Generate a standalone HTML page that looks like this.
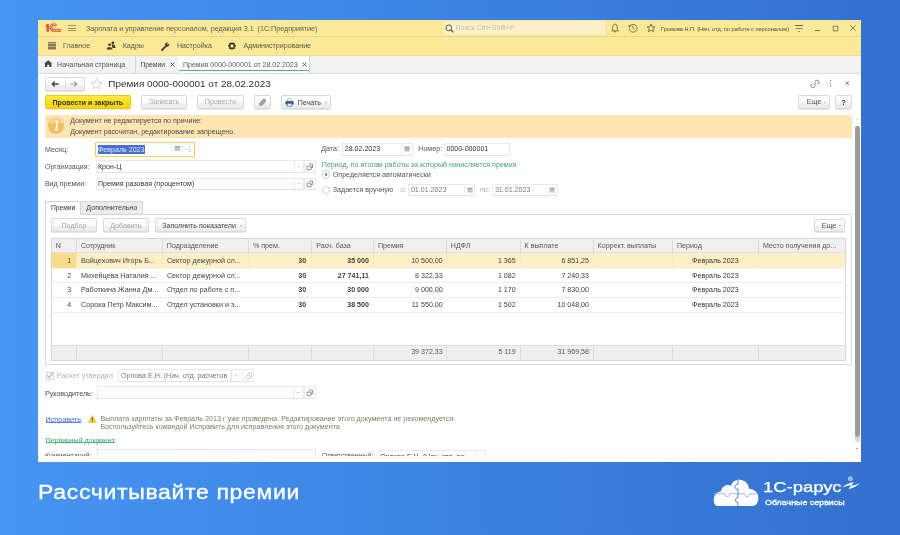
<!DOCTYPE html>
<html><head><meta charset="utf-8">
<style>
*{box-sizing:border-box;margin:0;padding:0}
html,body{width:900px;height:535px;overflow:hidden}
body{position:relative;font-family:"Liberation Sans",sans-serif;background:linear-gradient(90deg,#4695f3,#3470cd);color:#404040;font-size:7.1px}
.a{position:absolute;white-space:nowrap}
#win{position:absolute;left:38px;top:20px;width:823px;height:441px;background:#fff;overflow:hidden}
.bar{position:absolute}
.btn{position:absolute;border:1px solid #dadada;border-radius:2px;background:linear-gradient(#fefefe 0,#fafafa 55%,#f0f0f0 56%,#ececec 100%);box-shadow:0 1px 0 rgba(0,0,0,.1);text-align:center;color:#444;white-space:nowrap}
.dis{color:#a8a8a8}
.inp{position:absolute;border:1px solid #e9e9e9;border-bottom-color:#e2e2e2;background:#fff;white-space:nowrap;color:#333}
.lbl{position:absolute;white-space:nowrap;color:#555}
.vd{position:absolute;top:0;bottom:0;width:1px;background:#ececec}
.dd{position:absolute;width:0;height:0;border-left:1.6px solid transparent;border-right:1.6px solid transparent;border-top:1.6px solid #777}
svg{position:absolute;overflow:visible}
.th{position:absolute;top:0;height:15px;line-height:15px;color:#555;border-right:1px solid #dcdcdc;padding-left:4px;white-space:nowrap}
.row{position:absolute;left:0;width:795px;height:15px;border-bottom:1px solid #eeeeee}
.c{position:absolute;top:0;height:14px;line-height:14px;white-space:nowrap;color:#333}
.r{text-align:right}
.b{font-weight:bold}
</style></head><body>
<div id="root" style="position:absolute;left:0;top:0;width:900px;height:535px;will-change:transform">

<!-- window chrome -->
<div class="bar" style="left:38px;top:20px;width:823px;height:441.6px;background:#fff"></div>
<div class="bar" style="left:38px;top:20px;width:823px;height:17px;background:#fae997;border-bottom:1px solid #e6d488"></div>
<div class="bar" style="left:38px;top:37px;width:823px;height:19px;background:#fae997;border-bottom:1px solid #ecdb92"></div>
<div class="bar" style="left:38px;top:56px;width:823px;height:18px;background:#f2f2f2;border-bottom:1px solid #dcdcdc"></div>

<!-- title bar content -->
<svg style="left:45px;top:23px" width="18" height="10" viewBox="0 0 18 10">
  <path d="M1.5 1 H3.9 V8.7 H1.5 Z M0.5 3.4 L1.6 1.4 L1.6 4.2 Z" fill="#e55239"/>
  <path d="M11.8 2.4 A3.75 3.75 0 1 0 8.8 8.3 H16.1" fill="none" stroke="#e55239" stroke-width="1.15"/>
  <path d="M10.4 3.5 A2 2 0 1 0 8.8 6.5 H16.1" fill="none" stroke="#e55239" stroke-width="1.1"/>
</svg>
<div class="bar" style="left:68px;top:25px;width:8px;height:1px;background:#9a8f6a"></div>
<div class="bar" style="left:68px;top:27.5px;width:8px;height:1px;background:#9a8f6a"></div>
<div class="bar" style="left:68px;top:30px;width:8px;height:1px;background:#9a8f6a"></div>
<div class="a" style="left:86px;top:23.6px;line-height:10px;font-size:7.15px;color:#5e5b50">Зарплата и управление персоналом, редакция 3.1&nbsp; (1С:Предприятие)</div>
<div class="bar" style="left:444px;top:21px;width:161px;height:14px;background:#fbf1c8"></div>
<svg style="left:445px;top:24px" width="9" height="9" viewBox="0 0 9 9"><circle cx="3.8" cy="3.8" r="2.9" fill="none" stroke="#555" stroke-width="1"/><path d="M6 6 L8.2 8.2" stroke="#555" stroke-width="1.3"/></svg>
<div class="a" style="left:455.5px;top:23px;line-height:10px;font-size:7px;color:#c9c0a0">Поиск Ctrl+Shift+F</div>
<!-- bell -->
<svg style="left:610px;top:23px" width="10" height="10" viewBox="0 0 10 10"><path d="M5 1.2 C3.4 1.2 2.8 2.6 2.8 4.2 L2.8 6.2 L1.5 7.9 H8.5 L7.2 6.2 L7.2 4.2 C7.2 2.6 6.6 1.2 5 1.2 Z" fill="none" stroke="#5c5848" stroke-width="0.8" stroke-linejoin="round"/><circle cx="5" cy="8.7" r="0.75" fill="#5c5848"/></svg>
<!-- history -->
<svg style="left:628px;top:23px" width="10" height="10" viewBox="0 0 10 10"><path d="M2 3 A3.9 3.9 0 1 1 1.3 5.6" fill="none" stroke="#5c5848" stroke-width="0.8"/><path d="M0.9 2.2 L2.4 3.9 L1.2 4.1 Z" fill="#5c5848" stroke="#5c5848" stroke-width="0.6"/><path d="M4.2 2.8 L5.2 5.2 L6.6 6.4" fill="none" stroke="#5c5848" stroke-width="0.8"/></svg>
<!-- star -->
<svg style="left:646px;top:23px" width="10" height="10" viewBox="0 0 10 10"><path d="M5 1 L6.1 3.8 L9 3.9 L6.8 5.8 L7.6 8.8 L5 7.2 L2.4 8.8 L3.2 5.8 L1 3.9 L3.9 3.8 Z" fill="none" stroke="#5c5848" stroke-width="0.8" stroke-linejoin="round"/></svg>
<div class="a" style="left:661px;top:23.5px;line-height:10px;font-size:5.6px;color:#4a4a40">Громова Н.П. (Нач. отд. по работе с персоналом)</div>
<!-- filter icon -->
<div class="bar" style="left:795.3px;top:25px;width:7.8px;height:0.9px;background:#6a6553"></div>
<div class="bar" style="left:795.6px;top:27.8px;width:7.2px;height:0.9px;background:#8a8470"></div>
<div class="dd" style="left:797.6px;top:30.6px;border-width:1.4px 1.5px 0 1.5px;border-top-color:#4a4a55"></div>
<!-- window controls -->
<div class="bar" style="left:815px;top:29.6px;width:4.6px;height:0.9px;background:#7a7560"></div>
<svg style="left:832px;top:25px" width="7" height="7" viewBox="0 0 7 7"><path d="M1.2 1.2 H5.8 V5.8 H1.2 Z" fill="none" stroke="#6e6a58" stroke-width="0.85"/></svg>
<svg style="left:849px;top:24px" width="8" height="8" viewBox="0 0 8 8"><path d="M1.2 1.2 L6.8 6.8 M6.8 1.2 L1.2 6.8" stroke="#6e6a58" stroke-width="0.85"/></svg>

<!-- menu bar -->
<div class="bar" style="left:47.5px;top:42px;width:8px;height:8px;background:repeating-linear-gradient(#877b5c 0 1px,#bcb083 1px 1.6px)"></div>
<div class="a" style="left:63px;top:40.6px;line-height:10px;font-size:7.1px;color:#5c594c">Главное</div>
<svg style="left:106px;top:41px" width="10" height="9" viewBox="0 0 10 9"><circle cx="6.9" cy="1.9" r="1.35" fill="#3f3c32"/><path d="M5.6 4 C6.2 3.4 8 3.4 8.9 4.4 L9.6 6.9 H6.6 Z" fill="#3f3c32"/><circle cx="3.6" cy="3.7" r="1.6" fill="#3f3c32" stroke="#fae997" stroke-width="0.5"/><path d="M0.5 8.7 L0.9 6.8 C1.4 5.7 5.6 5.7 6.2 6.8 L6.6 8.7 Z" fill="#3f3c32" stroke="#fae997" stroke-width="0.4"/></svg>
<div class="a" style="left:122.7px;top:40.6px;line-height:10px;font-size:7.1px;color:#5c594c">Кадры</div>
<svg style="left:161px;top:42px" width="9" height="9" viewBox="0 0 9 9"><path d="M1 8 L4.6 4.4" stroke="#3f3c34" stroke-width="1.8" stroke-linecap="round"/><path d="M4 3.2 A2.4 2.4 0 0 1 7.2 0.6 L6 2 L6.8 2.8 L8.2 1.6 A2.4 2.4 0 0 1 5.4 4.8 Z" fill="#3f3c34"/></svg>
<div class="a" style="left:177px;top:40.6px;line-height:10px;font-size:7.1px;color:#5c594c">Настройка</div>
<svg style="left:228px;top:42px" width="8" height="8" viewBox="0 0 8 8"><circle cx="4" cy="4" r="2.4" fill="none" stroke="#3f3c34" stroke-width="1.5"/><path d="M4 0.2 V1.6 M4 6.4 V7.8 M0.2 4 H1.6 M6.4 4 H7.8 M1.3 1.3 L2.3 2.3 M5.7 5.7 L6.7 6.7 M1.3 6.7 L2.3 5.7 M5.7 2.3 L6.7 1.3" stroke="#3f3c34" stroke-width="1.3"/></svg>
<div class="a" style="left:243.4px;top:40.6px;line-height:10px;font-size:7.1px;color:#5c594c">Администрирование</div>

<!-- tabs -->
<svg style="left:43.6px;top:60.2px" width="8.5" height="7.5" viewBox="0 0 8.5 7.5"><path d="M4.2 0.3 L8.2 3.6 L7.4 3.6 L7.4 7 L5.2 7 L5.2 4.8 L3.2 4.8 L3.2 7 L1 7 L1 3.6 L0.2 3.6 Z" fill="#474747"/></svg>
<div class="a" style="left:57.1px;top:60.2px;line-height:10px;font-size:7.05px;color:#555">Начальная страница</div>
<div class="bar" style="left:135px;top:56px;width:1px;height:17px;background:#d6d6d6"></div>
<div class="a" style="left:140.5px;top:60.2px;line-height:10px;font-size:6.75px;color:#444">Премии</div>
<svg style="left:169.5px;top:62px" width="5" height="5" viewBox="0 0 5 5"><path d="M0.6 0.6 L4.4 4.4 M4.4 0.6 L0.6 4.4" stroke="#444" stroke-width="0.9"/></svg>
<div class="bar" style="left:177.5px;top:56px;width:1px;height:17px;background:#d6d6d6"></div>
<div class="bar" style="left:178px;top:56px;width:131px;height:17px;background:#fff"></div>
<div class="bar" style="left:179px;top:70px;width:129.5px;height:1.3px;background:#4cb37a"></div>
<div class="bar" style="left:308.5px;top:56px;width:1px;height:17px;background:#d6d6d6"></div>
<div class="a" style="left:183px;top:60.2px;line-height:10px;font-size:7.02px;color:#555">Премия 0000-000001 от 28.02.2023</div>
<svg style="left:301.8px;top:62px" width="5" height="5" viewBox="0 0 5 5"><path d="M0.6 0.6 L4.4 4.4 M4.4 0.6 L0.6 4.4" stroke="#444" stroke-width="0.9"/></svg>
<div class="bar" style="left:38px;top:73px;width:823px;height:1px;background:#dcdcdc"></div>

<!-- form header -->
<div class="btn" style="left:45px;top:77px;width:39.5px;height:13.5px"></div>
<div class="bar" style="left:64.5px;top:78px;width:1px;height:12px;background:#e2e2e2"></div>
<svg style="left:51px;top:81px" width="8" height="6" viewBox="0 0 8 6"><path d="M7.6 3 H1.6 M3.8 0.6 L1.2 3 L3.8 5.4" fill="none" stroke="#444" stroke-width="1.3"/></svg>
<svg style="left:70px;top:81px" width="8" height="6" viewBox="0 0 8 6"><path d="M0.4 3 H6.4 M4.2 0.6 L6.8 3 L4.2 5.4" fill="none" stroke="#9a9a9a" stroke-width="1.2"/></svg>
<svg style="left:90px;top:78px" width="13" height="12" viewBox="0 0 13 12"><path d="M6.5 0.6 L8.1 4.3 L12.2 4.5 L9 7.1 L10.1 11.2 L6.5 9 L2.9 11.2 L4 7.1 L0.8 4.5 L4.9 4.3 Z" fill="none" stroke="#c4c8cc" stroke-width="0.8" stroke-linejoin="round"/></svg>
<div class="a" style="left:108.3px;top:77.5px;line-height:12px;font-size:9.95px;color:#333">Премия 0000-000001 от 28.02.2023</div>
<svg style="left:810px;top:79px" width="10" height="10" viewBox="0 0 10 10"><g fill="none" stroke="#808080" stroke-width="0.95"><path d="M4.9 3.7 A2.1 2.1 0 1 1 7.4 5.4"/><path d="M5.1 6.3 A2.1 2.1 0 1 1 2.6 4.6"/><path d="M4 6 L6 4"/></g></svg>
<div class="bar" style="left:830.3px;top:80.3px;width:1.1px;height:1.1px;background:#6e6e6e"></div>
<div class="bar" style="left:830.3px;top:82.6px;width:1.1px;height:1.1px;background:#6e6e6e"></div>
<div class="bar" style="left:830.3px;top:84.9px;width:1.1px;height:1.1px;background:#6e6e6e"></div>
<svg style="left:845px;top:81.4px" width="4.4" height="4.4" viewBox="0 0 4.4 4.4"><path d="M0.4 0.4 L4 4 M4 0.4 L0.4 4" stroke="#7a7a7a" stroke-width="0.95"/></svg>

<!-- toolbar -->
<div class="btn" style="left:45px;top:95px;width:85.7px;height:14px;background:linear-gradient(#ffe944,#f6d200);border-color:#ecca10;font-weight:bold;font-size:7.05px;line-height:13.6px;color:#333">Провести и закрыть</div>
<div class="btn dis" style="left:141px;top:95px;width:46.3px;height:14px;line-height:13px">Записать</div>
<div class="btn dis" style="left:197px;top:95px;width:47px;height:14px;line-height:13px">Провести</div>
<div class="btn" style="left:254px;top:95px;width:16.5px;height:14px"></div>
<svg style="left:257px;top:97px" width="11" height="11" viewBox="0 0 11 11"><path d="M3.9 7.1 L7.1 3.6" stroke="#a0a0a0" stroke-width="4" stroke-linecap="round"/><path d="M4.8 6.6 L7.2 4" stroke="#c0c0c0" stroke-width="0.5"/></svg>
<div class="btn" style="left:281px;top:95px;width:49.6px;height:14px"></div>
<svg style="left:285px;top:98px" width="9" height="9" viewBox="0 0 9 9"><path d="M2.4 3 V0.9 H5.6 L6.6 1.9 V3" fill="none" stroke="#8aa0bc" stroke-width="0.7"/><rect x="0.3" y="3" width="8.4" height="3.8" rx="1.2" fill="#3d6198"/><rect x="2.2" y="5.3" width="4.6" height="2.8" fill="#fff" stroke="#3d6198" stroke-width="0.7"/></svg>
<div class="a" style="left:297.8px;top:97.6px;line-height:10px;font-size:7.1px;color:#444">Печать</div>
<div class="dd" style="left:324.8px;top:102px"></div>
<div class="btn" style="left:798.2px;top:95px;width:32.2px;height:14px;line-height:13px;text-align:left;padding-left:7.6px;color:#555">Еще</div>
<div class="dd" style="left:824px;top:101.6px;border-width:1.4px 1.3px 0 1.3px"></div>
<div class="btn b" style="left:835.2px;top:95px;width:16.8px;height:14px;line-height:13px;font-size:7.5px;color:#333">?</div>

<!-- notification -->
<div class="bar" style="left:44.9px;top:114.6px;width:806.8px;height:23.6px;background:#fee5b1"></div>
<div class="bar" style="left:47.6px;top:117px;width:16.8px;height:16.8px;border-radius:50%;background:linear-gradient(#f4d28e 0,#f4d28e 35%,#f1bf68 36%,#f1bf68 100%)"></div>
<svg style="left:47.6px;top:117px" width="17" height="17" viewBox="0 0 17 17"><circle cx="9" cy="4.8" r="1.25" fill="#fff"/><path d="M8 6.6 L9.9 6.6 L8.9 12.3 L9.9 12.3 L9.7 13.6 L6.7 13.6 L6.9 12.3 L7.4 12.3 L8.2 7.8 L7.8 7.8 Z" fill="#fff"/></svg>
<div class="a" style="left:70.2px;top:115.6px;line-height:11px;font-size:7.1px;color:#4a4a4a">Документ не редактируется по причине:<br>Документ рассчитан, редактирование запрещено.</div>

<!-- fields left -->
<div class="lbl" style="left:44.9px;top:144.8px;line-height:10px">Месяц:</div>
<div class="bar" style="left:94.9px;top:142.3px;width:100px;height:14.3px;border:1.6px solid #f6cd52;background:#fff"></div>
<div class="bar" style="left:97.9px;top:145.1px;width:46.9px;height:8.5px;background:#4a6fcf"></div>
<div class="a" style="left:97.9px;top:144.7px;line-height:10px;font-size:7.1px;color:#dfe6f6">Февраль 2023</div>
<div class="bar" style="left:171px;top:144px;width:1px;height:11px;background:#ececec"></div>
<div class="bar" style="left:182px;top:144px;width:1px;height:11px;background:#ececec"></div>
<svg style="left:173.6px;top:145.4px" width="7" height="7" viewBox="0 0 7 7"><rect x="0.6" y="1" width="5.6" height="5" rx="0.6" fill="#c4c4c4"/><rect x="0.6" y="1" width="5.6" height="1.3" fill="#a4a4a4"/></svg>
<div class="bar" style="left:183px;top:149px;width:11px;height:1px;background:#ececec"></div>
<div class="bar" style="left:188.5px;top:146.6px;width:1px;height:1px;background:#aaa"></div>
<div class="bar" style="left:188.5px;top:151.4px;width:1px;height:1px;background:#aaa"></div>

<div class="lbl" style="left:44.9px;top:161.5px;line-height:10px">Организация:</div>
<div class="inp" style="left:96.2px;top:160.3px;width:208px;height:12.3px;line-height:10.3px;padding-top:1px;padding-left:0.8px">Крон-Ц</div>
<div class="bar" style="left:293.6px;top:161px;width:1px;height:11px;background:#ececec"></div>
<div class="dd" style="left:297.2px;top:166px;border-top-color:#8a8a8a;margin-left:0.4px;margin-top:0.3px"></div>
<div class="inp" style="left:304.2px;top:160.3px;width:11.4px;height:12.3px"></div>
<svg style="left:306.3px;top:162.5px" width="8" height="8" viewBox="0 0 8 8"><path d="M3 1 H6.6 V4.6 H5 M1.2 3 H5 V6.8 H1.2 Z" fill="none" stroke="#606060" stroke-width="0.7"/></svg>

<div class="lbl" style="left:44.9px;top:178.5px;line-height:10px">Вид премии:</div>
<div class="inp" style="left:96.2px;top:177.5px;width:208px;height:12px;line-height:10px;padding-left:0.8px">Премия разовая (процентом)</div>
<div class="bar" style="left:293.6px;top:178px;width:1px;height:11px;background:#ececec"></div>
<div class="dd" style="left:297.2px;top:183px;border-top-color:#8a8a8a;margin-left:0.4px;margin-top:0.3px"></div>
<div class="inp" style="left:304.2px;top:177.5px;width:11.4px;height:12px"></div>
<svg style="left:306.3px;top:179.5px" width="8" height="8" viewBox="0 0 8 8"><path d="M3 1 H6.6 V4.6 H5 M1.2 3 H5 V6.8 H1.2 Z" fill="none" stroke="#606060" stroke-width="0.7"/></svg>

<!-- fields right -->
<div class="lbl" style="left:321.2px;top:144.1px;line-height:10px">Дата:</div>
<div class="inp" style="left:342.1px;top:142.9px;width:70.7px;height:12.9px;line-height:10.9px;padding-left:1.6px">28.02.2023</div>
<div class="bar" style="left:401.2px;top:143.5px;width:1px;height:11.5px;background:#ececec"></div>
<svg style="left:404.3px;top:146px" width="6" height="6" viewBox="0 0 6 6"><rect x="0.5" y="0.8" width="5" height="4.6" rx="0.5" fill="#bcbcbc"/><rect x="0.5" y="0.8" width="5" height="1.1" fill="#9c9c9c"/></svg>
<div class="lbl" style="left:418.3px;top:144.1px;line-height:10px">Номер:</div>
<div class="inp" style="left:443.9px;top:142.9px;width:66.2px;height:12.9px;line-height:10.9px;padding-left:1.6px">0000-000001</div>

<div class="a" style="left:321.8px;top:159.5px;line-height:10px;color:#3ea56e">Период, по итогам работы за который начисляется премия</div>
<div class="bar" style="left:321.6px;top:170.3px;width:8.6px;height:8.6px;border-radius:50%;border:0.8px solid #cfcfcf;background:#fff"></div>
<div class="bar" style="left:324.5px;top:173.1px;width:2.8px;height:2.8px;border-radius:50%;background:#3a9d63"></div>
<div class="lbl" style="left:332.8px;top:169.5px;line-height:10px">Определяется автоматически</div>
<div class="bar" style="left:321.6px;top:185.9px;width:8.6px;height:8.6px;border-radius:50%;border:0.8px solid #cfcfcf;background:#fff"></div>
<div class="lbl" style="left:332.8px;top:185px;line-height:10px">Задается вручную</div>
<div class="lbl" style="left:400.6px;top:185px;line-height:10px;color:#aaa">с:</div>
<div class="inp" style="left:408.3px;top:183.6px;width:66.5px;height:12.6px;line-height:10.6px;padding-left:1.6px;color:#7a7a7a">01.01.2023</div>
<div class="bar" style="left:463.9px;top:184.2px;width:1px;height:11.4px;background:#ececec"></div>
<svg style="left:466.8px;top:186.8px" width="6" height="6" viewBox="0 0 6 6"><rect x="0.5" y="0.8" width="5" height="4.6" rx="0.5" fill="#c2c2c2"/><rect x="0.5" y="0.8" width="5" height="1.1" fill="#a6a6a6"/></svg>
<div class="lbl" style="left:479.9px;top:185px;line-height:10px;color:#aaa">по:</div>
<div class="inp" style="left:492.3px;top:183.6px;width:65.4px;height:12.6px;line-height:10.6px;padding-left:1.6px;color:#7a7a7a">31.01.2023</div>
<div class="bar" style="left:546.3px;top:184.2px;width:1px;height:11.4px;background:#ececec"></div>
<svg style="left:549.2px;top:186.8px" width="6" height="6" viewBox="0 0 6 6"><rect x="0.5" y="0.8" width="5" height="4.6" rx="0.5" fill="#c2c2c2"/><rect x="0.5" y="0.8" width="5" height="1.1" fill="#a6a6a6"/></svg>

<!-- tab panel -->
<div class="bar" style="left:45px;top:214.4px;width:807.1px;height:151px;border:1px solid #dadada;background:#fff"></div>
<div class="bar" style="left:45px;top:201.3px;width:35.5px;height:14.2px;border:1px solid #d4d4d4;border-bottom:none;background:#fff"></div>
<div class="bar" style="left:80.5px;top:201.3px;width:62.5px;height:13.6px;border:1px solid #d4d4d4;border-left:none;background:#ececec"></div>
<div class="a" style="left:51px;top:202.6px;line-height:10px;font-size:6.7px;color:#333">Премии</div>
<div class="a" style="left:86.3px;top:202.6px;line-height:10px;font-size:7.1px;color:#444">Дополнительно</div>
<div class="btn dis" style="left:51.3px;top:218.4px;width:45.4px;height:14.1px;line-height:14.6px">Подбор</div>
<div class="btn dis" style="left:103px;top:218.4px;width:45.8px;height:14.1px;line-height:14.6px">Добавить</div>
<div class="btn" style="left:154.9px;top:218.4px;width:91.3px;height:14.1px;line-height:14.6px;text-align:left;padding-left:6.3px">Заполнить показатели</div>
<div class="dd" style="left:240px;top:225px"></div>
<div class="btn" style="left:813.8px;top:218.7px;width:31.6px;height:13.6px;line-height:12.9px;text-align:left;padding-left:6.9px;color:#555">Еще</div>
<div class="dd" style="left:839.2px;top:225.2px;border-width:1.4px 1.3px 0 1.3px"></div>
<div class="bar" style="left:51.1px;top:237.9px;width:795.1px;height:123.0px;border:1px solid #d6d6d6;background:#fff"></div>
<div class="bar" style="left:52.1px;top:238.9px;width:793.1px;height:14.5px;background:#f0f0f0;border-bottom:1px solid #e0e0e0"></div>
<div class="bar" style="left:52.1px;top:344.8px;width:793.1px;height:15.1px;background:#efefef;border-top:1px solid #dedede"></div>
<div class="bar" style="left:52.1px;top:253.4px;width:793.1px;height:14.65px;background:#fdf0c4"></div>
<div class="bar" style="left:52.1px;top:253.4px;width:24.2px;height:14.65px;background:#f9dc86"></div>
<div class="bar" style="left:52.1px;top:267.55px;width:793.1px;height:1px;background:#ededed"></div>
<div class="bar" style="left:52.1px;top:282.20px;width:793.1px;height:1px;background:#ededed"></div>
<div class="bar" style="left:52.1px;top:296.85px;width:793.1px;height:1px;background:#ededed"></div>
<div class="bar" style="left:52.1px;top:311.50px;width:793.1px;height:1px;background:#ededed"></div>
<div class="bar" style="left:75.8px;top:238.9px;width:1px;height:14.5px;background:#dcdcdc"></div>
<div class="bar" style="left:75.8px;top:253.4px;width:1px;height:14.65px;background:#f6e8bf"></div>
<div class="bar" style="left:75.8px;top:344.8px;width:1px;height:15.1px;background:#dddddd"></div>
<div class="bar" style="left:161.7px;top:238.9px;width:1px;height:14.5px;background:#dcdcdc"></div>
<div class="bar" style="left:161.7px;top:253.4px;width:1px;height:14.65px;background:#f6e8bf"></div>
<div class="bar" style="left:161.7px;top:344.8px;width:1px;height:15.1px;background:#dddddd"></div>
<div class="bar" style="left:247.9px;top:238.9px;width:1px;height:14.5px;background:#dcdcdc"></div>
<div class="bar" style="left:247.9px;top:253.4px;width:1px;height:14.65px;background:#f6e8bf"></div>
<div class="bar" style="left:247.9px;top:344.8px;width:1px;height:15.1px;background:#dddddd"></div>
<div class="bar" style="left:311.1px;top:238.9px;width:1px;height:14.5px;background:#dcdcdc"></div>
<div class="bar" style="left:311.1px;top:253.4px;width:1px;height:14.65px;background:#f6e8bf"></div>
<div class="bar" style="left:311.1px;top:344.8px;width:1px;height:15.1px;background:#dddddd"></div>
<div class="bar" style="left:372.8px;top:238.9px;width:1px;height:14.5px;background:#dcdcdc"></div>
<div class="bar" style="left:372.8px;top:253.4px;width:1px;height:14.65px;background:#f6e8bf"></div>
<div class="bar" style="left:372.8px;top:344.8px;width:1px;height:15.1px;background:#dddddd"></div>
<div class="bar" style="left:445.7px;top:238.9px;width:1px;height:14.5px;background:#dcdcdc"></div>
<div class="bar" style="left:445.7px;top:253.4px;width:1px;height:14.65px;background:#f6e8bf"></div>
<div class="bar" style="left:445.7px;top:344.8px;width:1px;height:15.1px;background:#dddddd"></div>
<div class="bar" style="left:519.5px;top:238.9px;width:1px;height:14.5px;background:#dcdcdc"></div>
<div class="bar" style="left:519.5px;top:253.4px;width:1px;height:14.65px;background:#f6e8bf"></div>
<div class="bar" style="left:519.5px;top:344.8px;width:1px;height:15.1px;background:#dddddd"></div>
<div class="bar" style="left:592.5px;top:238.9px;width:1px;height:14.5px;background:#dcdcdc"></div>
<div class="bar" style="left:592.5px;top:253.4px;width:1px;height:14.65px;background:#f6e8bf"></div>
<div class="bar" style="left:592.5px;top:344.8px;width:1px;height:15.1px;background:#dddddd"></div>
<div class="bar" style="left:671.8px;top:238.9px;width:1px;height:14.5px;background:#dcdcdc"></div>
<div class="bar" style="left:671.8px;top:253.4px;width:1px;height:14.65px;background:#f6e8bf"></div>
<div class="bar" style="left:671.8px;top:344.8px;width:1px;height:15.1px;background:#dddddd"></div>
<div class="bar" style="left:757.9px;top:238.9px;width:1px;height:14.5px;background:#dcdcdc"></div>
<div class="bar" style="left:757.9px;top:253.4px;width:1px;height:14.65px;background:#f6e8bf"></div>
<div class="bar" style="left:757.9px;top:344.8px;width:1px;height:15.1px;background:#dddddd"></div>
<div class="a" style="left:55.8px;top:241.2px;line-height:10px;color:#555">N</div>
<div class="a" style="left:80.9px;top:241.2px;line-height:10px;color:#555">Сотрудник</div>
<div class="a" style="left:166.8px;top:241.2px;line-height:10px;color:#555">Подразделение</div>
<div class="a" style="left:253.0px;top:241.2px;line-height:10px;color:#555">% прем.</div>
<div class="a" style="left:316.2px;top:241.2px;line-height:10px;color:#555">Расч. база</div>
<div class="a" style="left:377.9px;top:241.2px;line-height:10px;color:#555">Премия</div>
<div class="a" style="left:450.8px;top:241.2px;line-height:10px;color:#555">НДФЛ</div>
<div class="a" style="left:524.6px;top:241.2px;line-height:10px;color:#555">К выплате</div>
<div class="a" style="left:597.6px;top:241.2px;line-height:10px;color:#555">Коррект. выплаты</div>
<div class="a" style="left:676.9px;top:241.2px;line-height:10px;color:#555">Период</div>
<div class="a" style="left:763.0px;top:241.2px;line-height:10px;color:#555">Место получения до...</div>
<div class="a" style="left:51.1px;width:20.0px;top:255.7px;line-height:10px;text-align:right;color:#444;">1</div>
<div class="a" style="left:81.0px;top:255.7px;line-height:10px;color:#444;font-size:7.2px">Войцехович Игорь Б...</div>
<div class="a" style="left:166.9px;top:255.7px;line-height:10px;color:#444;font-size:7.2px">Сектор дежурной сл...</div>
<div class="a" style="left:248.4px;width:57.7px;top:255.7px;line-height:10px;text-align:right;color:#404040; font-weight:bold;">30</div>
<div class="a" style="left:311.6px;width:57.3px;top:255.7px;line-height:10px;text-align:right;color:#404040; font-weight:bold;">35 000</div>
<div class="a" style="left:373.3px;width:69.4px;top:255.7px;line-height:10px;text-align:right;color:#404040;">10 500,00</div>
<div class="a" style="left:446.2px;width:69.5px;top:255.7px;line-height:10px;text-align:right;color:#404040;">1 365</div>
<div class="a" style="left:520.0px;width:69.0px;top:255.7px;line-height:10px;text-align:right;color:#404040;">6 851,25</div>
<div class="a" style="left:672.3px;width:86.1px;top:255.7px;line-height:10px;text-align:center;color:#333">Февраль 2023</div>
<div class="a" style="left:51.1px;width:20.0px;top:270.7px;line-height:10px;text-align:right;color:#444;">2</div>
<div class="a" style="left:81.0px;top:270.7px;line-height:10px;color:#444;font-size:7.2px">Михейцева Наталия ...</div>
<div class="a" style="left:166.9px;top:270.7px;line-height:10px;color:#444;font-size:7.2px">Сектор дежурной сл...</div>
<div class="a" style="left:248.4px;width:57.7px;top:270.7px;line-height:10px;text-align:right;color:#404040; font-weight:bold;">30</div>
<div class="a" style="left:311.6px;width:57.3px;top:270.7px;line-height:10px;text-align:right;color:#404040; font-weight:bold;">27 741,11</div>
<div class="a" style="left:373.3px;width:69.4px;top:270.7px;line-height:10px;text-align:right;color:#404040;">8 322,33</div>
<div class="a" style="left:446.2px;width:69.5px;top:270.7px;line-height:10px;text-align:right;color:#404040;">1 082</div>
<div class="a" style="left:520.0px;width:69.0px;top:270.7px;line-height:10px;text-align:right;color:#404040;">7 240,33</div>
<div class="a" style="left:672.3px;width:86.1px;top:270.7px;line-height:10px;text-align:center;color:#333">Февраль 2023</div>
<div class="a" style="left:51.1px;width:20.0px;top:285.0px;line-height:10px;text-align:right;color:#444;">3</div>
<div class="a" style="left:81.0px;top:285.0px;line-height:10px;color:#444;font-size:7.2px">Работкина Жанна Дм...</div>
<div class="a" style="left:166.9px;top:285.0px;line-height:10px;color:#444;font-size:7.2px">Отдел по работе с п...</div>
<div class="a" style="left:248.4px;width:57.7px;top:285.0px;line-height:10px;text-align:right;color:#404040; font-weight:bold;">30</div>
<div class="a" style="left:311.6px;width:57.3px;top:285.0px;line-height:10px;text-align:right;color:#404040; font-weight:bold;">30 000</div>
<div class="a" style="left:373.3px;width:69.4px;top:285.0px;line-height:10px;text-align:right;color:#404040;">9 000,00</div>
<div class="a" style="left:446.2px;width:69.5px;top:285.0px;line-height:10px;text-align:right;color:#404040;">1 170</div>
<div class="a" style="left:520.0px;width:69.0px;top:285.0px;line-height:10px;text-align:right;color:#404040;">7 830,00</div>
<div class="a" style="left:672.3px;width:86.1px;top:285.0px;line-height:10px;text-align:center;color:#333">Февраль 2023</div>
<div class="a" style="left:51.1px;width:20.0px;top:299.7px;line-height:10px;text-align:right;color:#444;">4</div>
<div class="a" style="left:81.0px;top:299.7px;line-height:10px;color:#444;font-size:7.2px">Сорока Петр Максим...</div>
<div class="a" style="left:166.9px;top:299.7px;line-height:10px;color:#444;font-size:7.2px">Отдел установки и э...</div>
<div class="a" style="left:248.4px;width:57.7px;top:299.7px;line-height:10px;text-align:right;color:#404040; font-weight:bold;">30</div>
<div class="a" style="left:311.6px;width:57.3px;top:299.7px;line-height:10px;text-align:right;color:#404040; font-weight:bold;">38 500</div>
<div class="a" style="left:373.3px;width:69.4px;top:299.7px;line-height:10px;text-align:right;color:#404040;">11 550,00</div>
<div class="a" style="left:446.2px;width:69.5px;top:299.7px;line-height:10px;text-align:right;color:#404040;">1 502</div>
<div class="a" style="left:520.0px;width:69.0px;top:299.7px;line-height:10px;text-align:right;color:#404040;">10 048,00</div>
<div class="a" style="left:672.3px;width:86.1px;top:299.7px;line-height:10px;text-align:center;color:#333">Февраль 2023</div>
<div class="a" style="left:373.3px;width:69.4px;top:347.4px;line-height:10px;text-align:right;color:#555">39 372,33</div>
<div class="a" style="left:446.2px;width:69.5px;top:347.4px;line-height:10px;text-align:right;color:#555">5 119</div>
<div class="a" style="left:520.0px;width:69.0px;top:347.4px;line-height:10px;text-align:right;color:#555">31 969,58</div>

<!-- bottom section -->
<div class="bar" style="left:45.6px;top:372px;width:8.2px;height:8.2px;border:0.8px solid #d6d6d6;background:#fff"></div>
<svg style="left:46px;top:371px" width="8" height="8" viewBox="0 0 8 8"><path d="M1.3 4.2 L3.3 6.8 L7.1 1.2" fill="none" stroke="#b2b2b2" stroke-width="1.15"/></svg>
<div class="lbl" style="left:56.7px;top:371.4px;line-height:10px;font-size:7.25px;color:#b0b0b0">Расчет утвердил</div>
<div class="inp" style="left:118.2px;top:369.4px;width:113.3px;height:12.3px;line-height:10.3px;padding-top:1px;padding-left:1.8px;color:#777">Орлова Е.Н. (Нач. отд. расчетов</div>
<div class="inp" style="left:231px;top:369.4px;width:11.6px;height:12.3px"></div>
<div class="dd" style="left:234.8px;top:375px;border-top-color:#999"></div>
<div class="inp" style="left:242.2px;top:369.4px;width:11.5px;height:12.3px"></div>
<svg style="left:244.5px;top:371.6px" width="8" height="8" viewBox="0 0 8 8"><path d="M3 1 H6.6 V4.6 H5 M1.2 3 H5 V6.8 H1.2 Z" fill="none" stroke="#c4c4c4" stroke-width="0.8"/></svg>

<div class="lbl" style="left:44.9px;top:389px;line-height:10px;font-size:7.14px;color:#4a4a4a">Руководитель:</div>
<div class="inp" style="left:96.7px;top:386.4px;width:197px;height:12.6px"></div>
<div class="inp" style="left:292.8px;top:386.4px;width:11.5px;height:12.6px"></div>
<div class="dd" style="left:296.6px;top:392px;border-top-color:#8a8a8a;margin-left:0.4px;margin-top:0.3px"></div>
<div class="inp" style="left:304px;top:386.4px;width:11.6px;height:12.6px"></div>
<svg style="left:306.3px;top:388.7px" width="8" height="8" viewBox="0 0 8 8"><path d="M3 1 H6.6 V4.6 H5 M1.2 3 H5 V6.8 H1.2 Z" fill="none" stroke="#606060" stroke-width="0.7"/></svg>

<div class="a" style="left:45.6px;top:414.6px;line-height:10px;font-size:7.19px;color:#4169c8">Исправить</div>
<div class="bar" style="left:45.6px;top:421.6px;width:35.6px;height:0.8px;background:#5a80d4"></div>
<svg style="left:88px;top:414.8px" width="9" height="8" viewBox="0 0 9 8"><path d="M4.3 0.4 L8.4 7.6 L0.2 7.6 Z" fill="#f0cd1e" stroke="#e2b816" stroke-width="0.4" stroke-linejoin="round"/><path d="M4.3 2.6 V5.2" stroke="#3a3a2a" stroke-width="1"/><circle cx="4.3" cy="6.4" r="0.5" fill="#3a3a2a"/></svg>
<div class="a" style="left:100.4px;top:415.4px;line-height:8px;font-size:7.15px;color:#857a60">Выплата зарплаты за Февраль 2013 г уже проведена. Редактирование этого документа не рекомендуется.<br>Воспользуйтесь командой Исправить для исправления этого документа</div>
<div class="a" style="left:45.6px;top:435.6px;line-height:10px;font-size:7.03px;color:#35a564">Первичный документ</div>
<div class="bar" style="left:45.6px;top:441.8px;width:69.6px;height:0.8px;background:#4fb37a"></div>

<div class="lbl" style="left:44.9px;top:451px;line-height:10px;color:#555">Комментарий:</div>
<div class="inp" style="left:96.7px;top:448.9px;width:218.9px;height:14px"></div>
<div class="lbl" style="left:321.8px;top:451px;line-height:10px;font-size:6.94px;color:#555">Ответственный:</div>
<div class="inp" style="left:377.3px;top:449.5px;width:108.5px;height:13px;line-height:12px;padding-left:1.6px">Орлова Е.Н. (Нач. отд. ра</div>
<div class="bar" style="left:463.8px;top:451px;width:1px;height:10px;background:#ececec"></div>
<div class="bar" style="left:475.1px;top:451px;width:1px;height:10px;background:#ececec"></div>

<div class="bar" style="left:38px;top:456.3px;width:816px;height:5.3px;background:#fff"></div>
<!-- scrollbar -->
<div class="bar" style="left:855.3px;top:126px;width:4.8px;height:316px;border-radius:2.4px;background:#d8d8d8"></div>
<div class="bar" style="left:855.3px;top:126px;width:4.8px;height:311px;border-radius:2.4px;background:#9b9b9b"></div>
<div class="dd" style="left:856px;top:119px;border-top:none;border-bottom:1.6px solid #bbb;border-left-width:1.6px;border-right-width:1.6px"></div>
<div class="dd" style="left:856px;top:448px;border-top:1.6px solid #555;border-left-width:1.6px;border-right-width:1.6px"></div>

<!-- window bottom clip -->
<div class="bar" style="left:0;top:461.6px;width:900px;height:74px;background:linear-gradient(90deg,#4695f3,#3470cd)"></div>

<!-- branding -->
<div class="a" style="left:37.6px;top:477.5px;line-height:28px;font-size:20.5px;letter-spacing:0.6px;color:#fff;-webkit-text-stroke:0.35px #fff;transform:scaleX(1.122);transform-origin:0 0">Рассчитывайте премии</div>
<svg style="left:712px;top:476px" width="50" height="34" viewBox="0 0 50 34">
  <path d="M6 30 C3 30 1.8 27.5 1.8 24 C1.8 19.5 4.5 16 9 15.3 C9.5 11.5 12.5 9 16 9 C17 9 18.2 9.3 19 9.8 C20 5.8 23.5 3.8 27.5 3.8 C32.5 3.8 36.5 7.5 37 12.8 C42.5 13.2 46.4 16.5 46.4 22 C46.4 26.5 44 30 40 30 Z" fill="#fff"/>
  <path d="M1.8 17.8 H13 A2.3 2.3 0 1 0 17.5 17.8 H32.8 A2.3 2.3 0 1 0 37.3 17.8 H46.4" fill="none" stroke="#8fb2ea" stroke-width="0.9"/>
  <path d="M26 3.8 V8.4 A2.5 2.5 0 1 0 26 13.3 V21.6 A2.5 2.5 0 1 0 26 26.6 V30" fill="none" stroke="#3a77d4" stroke-width="0.9"/>
</svg>
<div class="a" style="left:763.3px;top:476.5px;line-height:20px;font-size:15px;color:#fff;-webkit-text-stroke:0.25px #fff;transform:scaleX(1.23);transform-origin:0 0">1С-рарус</div>
<svg style="left:836px;top:472px" width="30" height="22" viewBox="0 0 30 22"><path d="M6.2 15.6 C9 12.5 14 10.5 18.1 9.9 L14.5 14 C17 13.8 21 12.5 23.8 11.1 C21.5 14 17 16.5 12.3 16.9 L15.8 12.9 C12.5 13.2 9 14.5 6.2 15.6 Z" fill="#fff"/><circle cx="14.4" cy="6.8" r="2.5" fill="#a9c3ee" opacity="0.85"/></svg>
<div class="a" style="left:765.3px;top:497.5px;line-height:10px;font-size:8px;color:#fff;-webkit-text-stroke:0.3px #fff;transform:scaleX(1.11);transform-origin:0 0">Облачные сервисы</div>

</div>
</body></html>
